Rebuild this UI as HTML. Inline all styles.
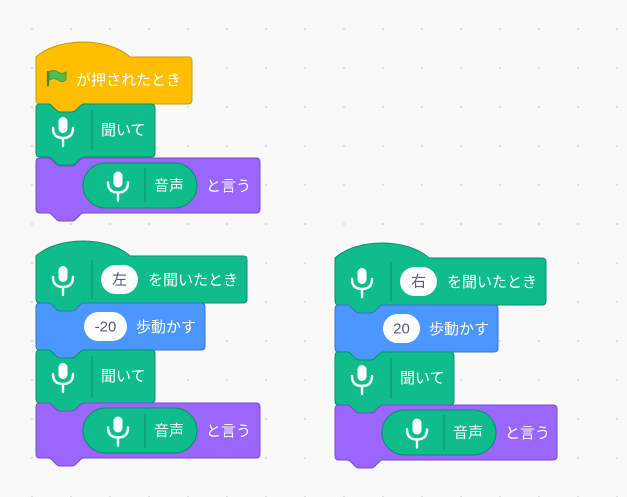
<!DOCTYPE html>
<html><head><meta charset="utf-8">
<style>
html,body{margin:0;padding:0;}
body{width:627px;height:497px;overflow:hidden;background-color:#f9f9f9;
background-image:radial-gradient(circle,#dcdcdc 1px,transparent 1.3px);
background-size:39px 39px;background-position:12.5px 48.5px;}
svg{position:absolute;left:0;top:0;}
text{font-family:"Liberation Sans","Noto Sans CJK JP",sans-serif;font-size:15px;fill:#fff;}
</style></head>
<body>
<svg id="s" width="627" height="497" xmlns="http://www.w3.org/2000/svg"></svg>
<script>
const C={y:['#FFBF00','#CC9900'],g:['#0FBD8C','#0B8E69'],b:['#4C97FF','#3373CC'],p:['#9966FF','#774DCB']};
let out='';
function notchTop(x,y){return `L${x+12},${y} C${x+14},${y} ${x+15},${y+1} ${x+16},${y+2} L${x+20},${y+6} C${x+21},${y+7} ${x+22},${y+8} ${x+24},${y+8} L${x+36},${y+8} C${x+38},${y+8} ${x+39},${y+7} ${x+40},${y+6} L${x+44},${y+2} C${x+45},${y+1} ${x+46},${y} ${x+48},${y} `;}
function notchBot(x,y){return `L${x+48},${y} C${x+46},${y} ${x+45},${y+1} ${x+44},${y+2} L${x+40},${y+6} C${x+39},${y+7} ${x+38},${y+8} ${x+36},${y+8} L${x+24},${y+8} C${x+22},${y+8} ${x+21},${y+7} ${x+20},${y+6} L${x+16},${y+2} C${x+15},${y+1} ${x+14},${y} ${x+12},${y} `;}
function block(x,y,w,h,col,hat){
 let r=4,d;
 if(hat){d=`M${x},${y} C${x+22},${y-20} ${x+72},${y-20} ${x+94},${y} L${x+w-r},${y} Q${x+w},${y} ${x+w},${y+r} `;}
 else{d=`M${x},${y+r} Q${x},${y} ${x+r},${y} `+notchTop(x,y)+`L${x+w-r},${y} Q${x+w},${y} ${x+w},${y+r} `;}
 d+=`L${x+w},${y+h-r} Q${x+w},${y+h} ${x+w-r},${y+h} `+notchBot(x,y+h)+`L${x+r},${y+h} Q${x},${y+h} ${x},${y+h-r} Z`;
 out+=`<path d="${d}" fill="${C[col][0]}" stroke="${C[col][1]}" stroke-width="1"/>`;
}
function mic(cx,cy){
 out+=`<rect x="${cx-4.5}" y="${cy-11}" width="9" height="16" rx="4.5" fill="#fff"/>
 <path d="M${cx-10},${cy} Q${cx-10},${cy+10} ${cx},${cy+10} Q${cx+10},${cy+10} ${cx+10},${cy}" fill="none" stroke="#fff" stroke-width="2.4" stroke-linecap="round"/>
 <line x1="${cx}" y1="${cy+10}" x2="${cx}" y2="${cy+18}" stroke="#fff" stroke-width="2.4" stroke-linecap="round"/>`;
}
function div(x,y1,y2,c){out+=`<line x1="${x}" y1="${y1}" x2="${x}" y2="${y2}" stroke="${c}" stroke-width="1"/>`;}
function txt(x,y,t,fill){out+=`<text x="${x}" y="${y}"${fill?` style="fill:${fill}"`:''}>${t}</text>`;}
function pill(x,y,w,h,t){out+=`<rect x="${x}" y="${y}" width="${w}" height="${h}" rx="${h/2}" fill="#fff"/>`;out+=`<text x="${x+w/2}" y="${y+h/2+5}" text-anchor="middle" style="fill:#575E75">${t}</text>`;}
function reporter(x,y,w,h){out+=`<rect x="${x}" y="${y}" width="${w}" height="${h}" rx="${h/2}" fill="#0FBD8C" stroke="#0B8E69"/>`;mic(x+35,y+h/2-3);div(x+62,y+5,y+h-5,'#0B8E69');txt(x+71,y+h/2+5,'音声');}
function listenBlock(x,y){block(x,y,119,53,'g');mic(x+27,y+24);div(x+56,y+6,y+47,'#0B8E69');txt(x+65,y+31,'聞いて');}
function sayBlock(x,y,w){block(x,y,w,55,'p');reporter(x+47,y+5,114,45);txt(x+170,y+33,'と言う');}

block(36,57,156,47,'y',true);
out+=`<path d="M48,71 L48,86" stroke="#3F8D2F" stroke-width="2.2"/><path d="M49,72 Q54,69 58,72 Q62,75 66,72 L66,80 Q62,83 58,80 Q54,77 49,80 Z" fill="#4CBF56" stroke="#45993D" stroke-width="1"/>`;
txt(76,85,'が押されたとき');
listenBlock(36,104);
sayBlock(36,158,224);

function stack(x,y,wHat,wMove,wSay,letter,num,numW){
 block(x,y,wHat,47,'g',true);mic(x+27,y+21);div(x+56,y+4,y+43,'#0B8E69');
 pill(x+65,y+9,37,29,letter);txt(x+112,y+29,'を聞いたとき');
 block(x,y+47,wMove,47,'b');pill(x+48,y+56,numW,29,num);txt(x+48+numW+9,y+76,'歩動かす');
 listenBlock(x,y+94);
 sayBlock(x,y+147,wSay);
}
stack(36,256,211,169,224,'左','-20',43);
stack(335,258,211,163,222,'右','20',37);

document.getElementById('s').innerHTML=out;
</script>
</body></html>
